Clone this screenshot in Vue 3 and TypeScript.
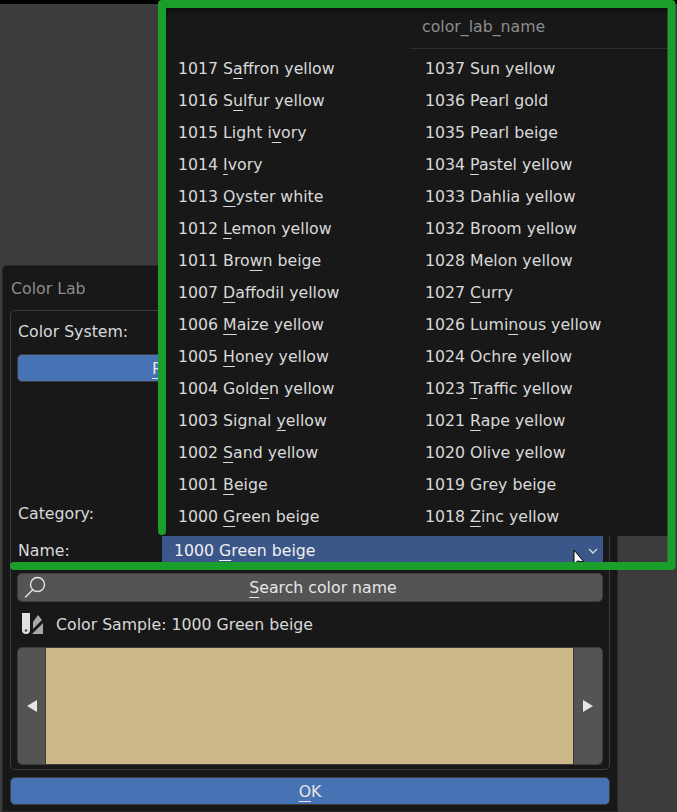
<script setup lang="ts">
interface Item {
  pre: string
  key: string
  post: string
}

// pre + underlined access key + post
const leftItems: Item[] = [
  { pre: '1017 S', key: 'a', post: 'ffron yellow' },
  { pre: '1016 S', key: 'u', post: 'lfur yellow' },
  { pre: '1015 Light i', key: 'v', post: 'ory' },
  { pre: '1014 ', key: 'I', post: 'vory' },
  { pre: '1013 ', key: 'O', post: 'yster white' },
  { pre: '1012 ', key: 'L', post: 'emon yellow' },
  { pre: '1011 Bro', key: 'w', post: 'n beige' },
  { pre: '1007 ', key: 'D', post: 'affodil yellow' },
  { pre: '1006 ', key: 'M', post: 'aize yellow' },
  { pre: '1005 ', key: 'H', post: 'oney yellow' },
  { pre: '1004 Gold', key: 'e', post: 'n yellow' },
  { pre: '1003 Signal ', key: 'y', post: 'ellow' },
  { pre: '1002 ', key: 'S', post: 'and yellow' },
  { pre: '1001 ', key: 'B', post: 'eige' },
  { pre: '1000 ', key: 'G', post: 'reen beige' }
]

const rightItems: Item[] = [
  { pre: '1037 Sun yellow', key: '', post: '' },
  { pre: '1036 Pearl gold', key: '', post: '' },
  { pre: '1035 Pearl beige', key: '', post: '' },
  { pre: '1034 ', key: 'P', post: 'astel yellow' },
  { pre: '1033 Dahlia yellow', key: '', post: '' },
  { pre: '1032 Broom yellow', key: '', post: '' },
  { pre: '1028 Melon yellow', key: '', post: '' },
  { pre: '1027 ', key: 'C', post: 'urry' },
  { pre: '1026 Lumi', key: 'n', post: 'ous yellow' },
  { pre: '1024 Ochre yellow', key: '', post: '' },
  { pre: '1023 ', key: 'T', post: 'raffic yellow' },
  { pre: '1021 ', key: 'R', post: 'ape yellow' },
  { pre: '1020 Olive yellow', key: '', post: '' },
  { pre: '1019 Grey beige', key: '', post: '' },
  { pre: '1018 ', key: 'Z', post: 'inc yellow' }
]
</script>

<template>
  <div class="screen">
    <div class="topbar"></div>

    <div class="dialog">
      <div class="dialog-title">Color Lab</div>
      <div class="box">
        <div class="label-row">Color System:</div>
        <button class="btn primary system"><span class="k">R</span></button>
        <div class="spacer"></div>
        <div class="field-row cat-row">
          <span class="field-label">Category:</span>
        </div>
        <div class="field-row">
          <span class="field-label">Name:</span>
          <div class="dropdown">
            <span>1000 <span class="k">G</span>reen beige</span>
            <svg class="chev" width="10" height="6" viewBox="0 0 10 6">
              <path d="M1 1l4 4 4-4" fill="none" stroke="#d8d8d8" stroke-width="1.4" />
            </svg>
          </div>
        </div>
        <button class="btn search">
          <svg class="search-icon" width="24" height="24" viewBox="0 0 24 24">
            <circle cx="13.5" cy="9.5" r="7" fill="none" stroke="#e6e6e6" stroke-width="1.4" />
            <path d="M8.5 15L1.5 22" fill="none" stroke="#e6e6e6" stroke-width="1.4" stroke-linecap="round" />
          </svg>
          <span><span class="k">S</span>earch color name</span>
        </button>
        <div class="sample-row">
          <svg width="24" height="24" viewBox="0 0 24 24">
            <path d="M2 1h8v17a4 4 0 0 1-8 0z" fill="#e0e0e0" />
            <circle cx="6" cy="18.5" r="1.3" fill="#444" />
            <path d="M13 10l5-7 4 5-9 9z" fill="#a8a8a8" />
            <path d="M12 22l11-11v11z" fill="#a8a8a8" />
          </svg>
          <span>Color Sample: 1000 Green beige</span>
        </div>
        <div class="swatch">
          <div class="arrow prev">
            <svg width="10" height="12" viewBox="0 0 10 12"><path d="M10 0v12L0 6z" fill="#e6e6e6" /></svg>
          </div>
          <div class="colour"></div>
          <div class="arrow">
            <svg width="10" height="12" viewBox="0 0 10 12"><path d="M0 0v12l10-6z" fill="#e6e6e6" /></svg>
          </div>
        </div>
      </div>
      <button class="btn primary ok"><span><span class="k">O</span>K</span></button>
    </div>

    <div class="menu">
      <div class="menu-head">
        <span class="menu-title">color_lab_name</span>
      </div>
      <div class="menu-cols">
        <ul class="col">
          <li v-for="item in leftItems" :key="item.pre">{{ item.pre }}<span class="k">{{ item.key }}</span>{{ item.post }}</li>
        </ul>
        <ul class="col">
          <li v-for="item in rightItems" :key="item.pre">{{ item.pre }}<span class="k">{{ item.key }}</span>{{ item.post }}</li>
        </ul>
      </div>
    </div>

    <svg class="cursor" width="14" height="18" viewBox="0 0 14 18">
      <path d="M1 1v14l3.5-3 6.5 1z" fill="#fff" stroke="#000" stroke-width="1" />
    </svg>

    <!-- green highlight drawn over the shot -->
    <svg class="frame" width="677" height="812" viewBox="0 0 677 812">
      <path d="M162 531V4H671.5V566H14" fill="none" stroke="#1a9e2c" stroke-width="8" stroke-linecap="round" stroke-linejoin="round" />
    </svg>
  </div>
</template>

<style>
html,
body {
  margin: 0;
  background: #3a3a3a;
}
</style>

<style scoped>
.screen {
  position: relative;
  width: 677px;
  height: 812px;
  overflow: hidden;
  background: #3c3c3c;
  font-family: "DejaVu Sans", sans-serif;
  font-size: 15.75px;
  color: #d9d9d9;
}

.topbar {
  height: 4px;
  background: #000;
}

.k {
  text-decoration: underline;
  text-decoration-thickness: 1px;
  text-underline-offset: 4px;
}

.dialog {
  position: absolute;
  left: 2px;
  top: 265px;
  width: 616px;
  height: 547px;
  box-sizing: border-box;
  padding: 0 7px;
  background: #181818;
  border: 1px solid #262626;
  border-radius: 5px 5px 0 0;
}

.dialog-title {
  height: 44px;
  padding: 13px 0 0 1px;
  box-sizing: border-box;
  color: #8c8c8c;
}

.box {
  box-sizing: border-box;
  height: 460px;
  padding: 6px 6px 0;
  border: 1px solid #3d3d3d;
  border-radius: 5px;
}

.label-row {
  height: 37px;
  line-height: 30px;
  padding-left: 1px;
}

.btn {
  display: flex;
  align-items: center;
  justify-content: center;
  width: 100%;
  height: 28px;
  padding: 0;
  box-sizing: border-box;
  font: inherit;
  color: #e6e6e6;
  border: 1px solid #3d3d3d;
  border-radius: 5px;
}

.primary {
  background: #4772b3;
}

.system {
  justify-content: flex-start;
  padding-left: 134px;
}

.spacer {
  height: 117px;
}

.field-row {
  display: flex;
  align-items: center;
  height: 28px;
}

.cat-row {
  margin-bottom: 9px;
}

.field-label {
  width: 145px;
  padding-left: 1px;
  box-sizing: border-box;
}

.dropdown {
  flex: 1;
  display: flex;
  align-items: center;
  justify-content: space-between;
  height: 28px;
  padding: 0 5px 0 12px;
  box-sizing: border-box;
  background: #3b5689;
  color: #f0f0f0;
}

.chev {
  margin-top: 2px;
}

.search {
  position: relative;
  height: 29px;
  margin-top: 9px;
  padding-left: 26px;
  background: #545454;
}

.search-icon {
  position: absolute;
  left: 6px;
  top: 1px;
}

.sample-row {
  display: flex;
  align-items: center;
  gap: 12px;
  height: 44px;
  padding-left: 3px;
}

.swatch {
  display: flex;
  height: 116px;
  margin-top: 1px;
  border: 1px solid #3d3d3d;
  border-radius: 5px;
  overflow: hidden;
}

.arrow {
  display: flex;
  align-items: center;
  justify-content: center;
  width: 28px;
  background: #545454;
}

.prev {
  width: 27px;
}

.colour {
  flex: 1;
  background: #cdb987;
  border-left: 1px solid #3a3a3a;
  border-right: 1px solid #3a3a3a;
}

.ok {
  margin-top: 7px;
}

.menu {
  position: absolute;
  left: 165px;
  top: 8px;
  width: 504px;
  height: 528px;
  background: #181818;
  box-shadow: inset 0 6px 6px -4px #0c0c0c;
}

.menu-head {
  display: flex;
  align-items: center;
  height: 40px;
  margin-left: 245px;
  padding-left: 12px;
  border-bottom: 1px solid #2e2e2e;
}

.menu-title {
  color: #8c8c8c;
  margin-top: -4px;
}

.menu-cols {
  display: grid;
  grid-template-columns: 247px 1fr;
}

.col {
  list-style: none;
  margin: 0;
  padding: 4px 0 0 13px;
}

.col li {
  height: 32px;
  line-height: 32px;
  white-space: pre;
}

.cursor {
  position: absolute;
  left: 573px;
  top: 549px;
}

.frame {
  position: absolute;
  left: 0;
  top: 0;
  pointer-events: none;
}
</style>
